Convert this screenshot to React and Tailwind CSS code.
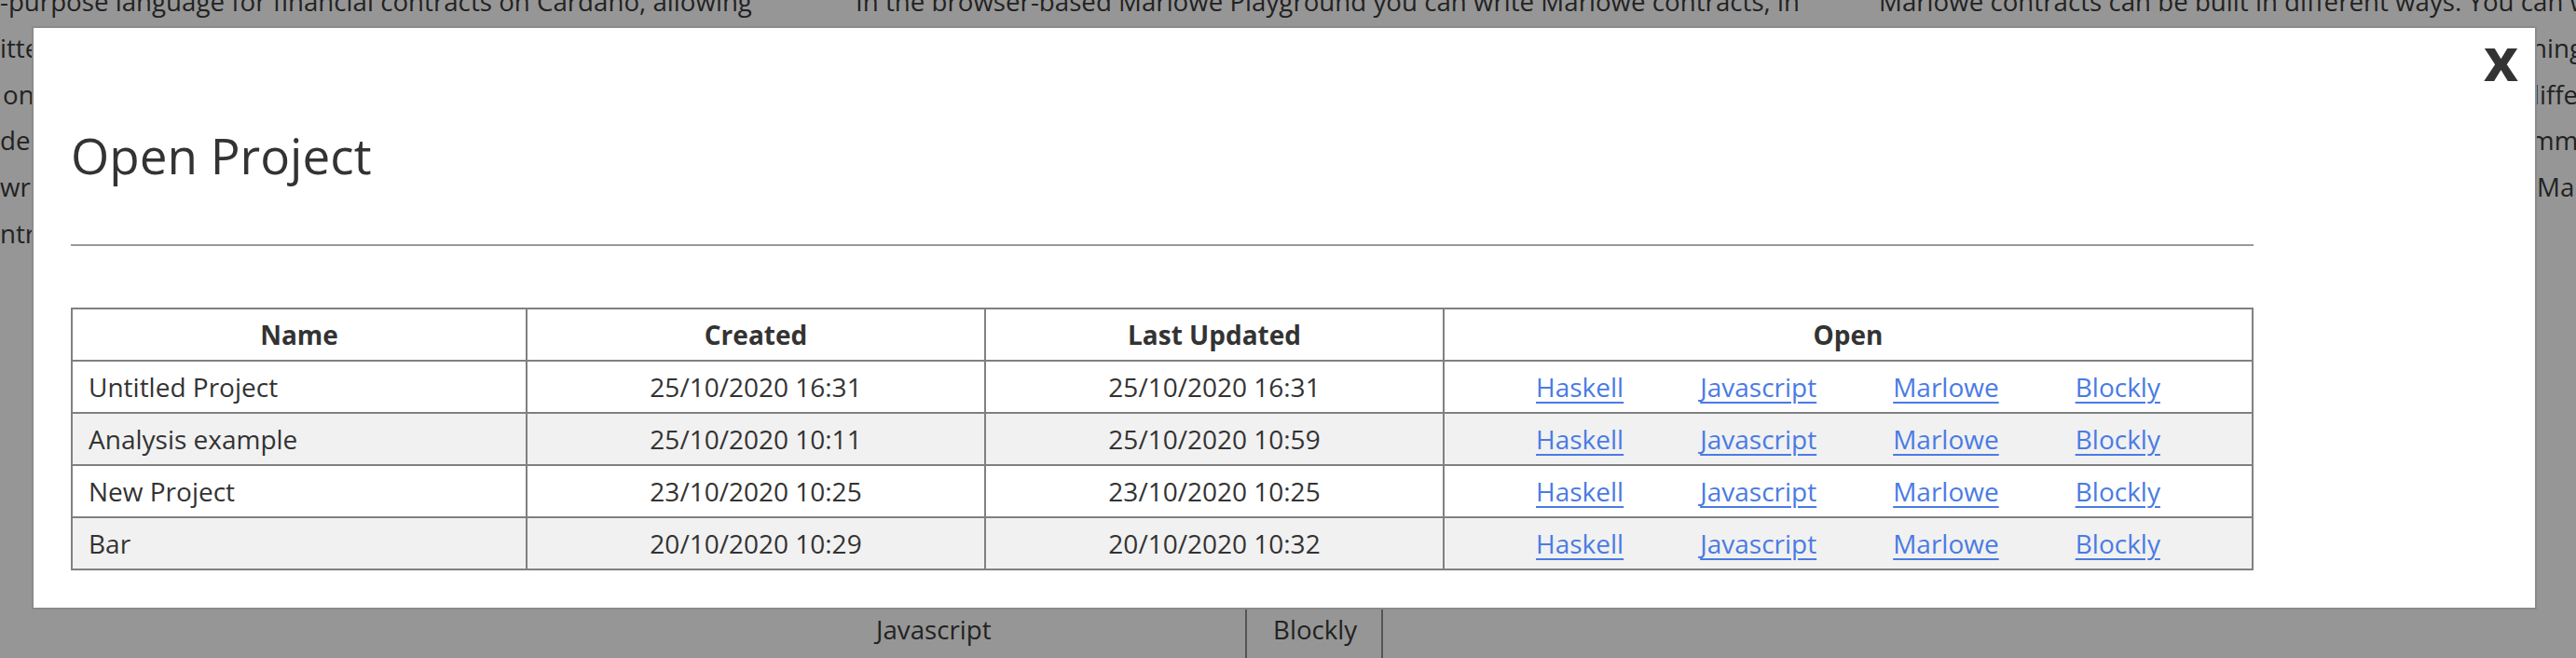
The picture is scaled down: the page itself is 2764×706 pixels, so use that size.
import React from "react";

const rows = [
  ["Untitled Project", "25/10/2020 16:31", "25/10/2020 16:31"],
  ["Analysis example", "25/10/2020 10:11", "25/10/2020 10:59"],
  ["New Project", "23/10/2020 10:25", "23/10/2020 10:25"],
  ["Bar", "20/10/2020 10:29", "20/10/2020 10:32"],
];

const links = ["Haskell", "Javascript", "Marlowe", "Blockly"];

export default function App() {
  return (
    <div className="relative w-[2764px] h-[706px] overflow-hidden bg-[#969696] font-['Open_Sans',sans-serif] text-[28px] text-[#222]">
      {/* background page */}
      <div className="flex flex-col -mt-[23px] text-[27.7px]">
        <div className="flex leading-[49.8px] whitespace-nowrap">
          <div className="w-[918px] shrink-0">
            <div>-purpose language for financial contracts on Cardano, allowing</div>
            <div>itten and run on the blockchain</div>
            <div className="pl-[3px]">on the chain</div>
            <div>der</div>
            <div>writ</div>
            <div>ntra</div>
          </div>
          <div className="w-[1098px] shrink-0">
            <div>In the browser-based Marlowe Playground you can write Marlowe contracts, in</div>
          </div>
          <div className="shrink-0">
            <div>Marlowe contracts can be built in different ways. You can write</div>
            <div><span className="inline-block w-[700px]">them directly, or</span>hing</div>
            <div><span className="inline-block w-[692px]">in Blockly, or in</span>different</div>
            <div><span className="inline-block w-[699px]">using a progra</span>mming</div>
            <div><span className="inline-block w-[706px]">language to</span>Marlowe</div>
          </div>
        </div>
        <div className="flex mt-[354px] ml-[911px] h-[100px] leading-[49.8px]">
          <div className="w-[425px] pl-[29px] pt-[21px]">Javascript</div>
          <div className="w-[148px] border-x-2 border-[#555] pl-[28px] pt-[21px]">Blockly</div>
        </div>
      </div>

      {/* modal */}
      <div className="absolute left-[34px] top-[28px] w-[2688px] border-2 border-[#8a8a8a] bg-white pl-[40px] pr-[302px] pt-[110px] pb-[40px] text-[#333]">
        <button className="absolute right-[18px] top-[1px] text-[64px] font-bold leading-none text-[#333]">x</button>
        <h1 className="text-[53px] leading-none font-normal">Open Project</h1>
        <div className="mt-[69px] h-[2px] bg-[#999]" />
        <div className="mt-[66px] border-2 border-[#808080]">
          <div className="grid grid-cols-[488px_492px_492px_866px] h-[56px] border-b-2 border-[#808080] font-bold">
            <div className="flex items-center justify-center border-r-2 border-[#808080]">Name</div>
            <div className="flex items-center justify-center border-r-2 border-[#808080]">Created</div>
            <div className="flex items-center justify-center border-r-2 border-[#808080]">Last Updated</div>
            <div className="flex items-center justify-center">Open</div>
          </div>
          {rows.map((r, i) => (
            <div
              key={i}
              className={
                "grid grid-cols-[488px_492px_492px_866px] " +
                (i === rows.length - 1 ? "h-[54px] " : "h-[56px] border-b-2 border-[#808080] ") +
                (i % 2 === 1 ? "bg-[#f1f1f1]" : "bg-white")
              }
            >
              <div className="flex items-center pl-[17px] border-r-2 border-[#808080]">{r[0]}</div>
              <div className="flex items-center justify-center border-r-2 border-[#808080]">{r[1]}</div>
              <div className="flex items-center justify-center border-r-2 border-[#808080]">{r[2]}</div>
              <div className="flex items-center justify-center gap-[82px]">
                {links.map((l) => (
                  <a key={l} href="#" className="text-[#4a7be3] underline decoration-2 underline-offset-[5px]">
                    {l}
                  </a>
                ))}
              </div>
            </div>
          ))}
        </div>
      </div>
    </div>
  );
}
